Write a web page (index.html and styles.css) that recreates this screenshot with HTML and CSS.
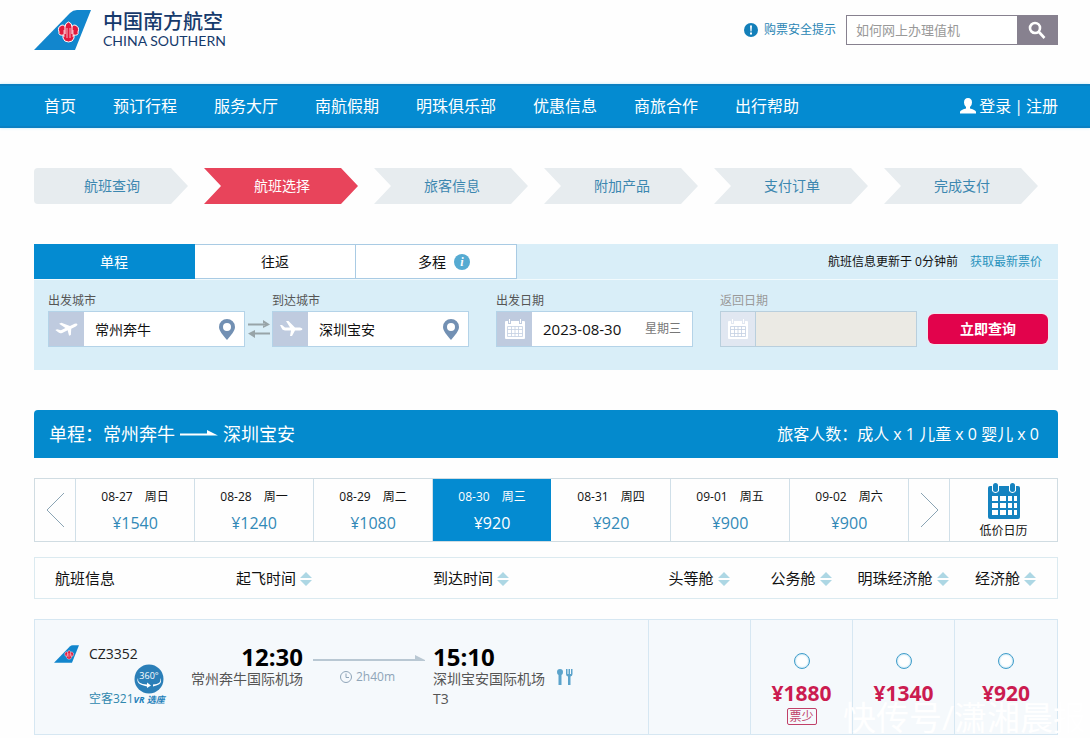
FILE: index.html
```html
<!DOCTYPE html>
<html lang="zh-CN">
<head>
<meta charset="utf-8">
<title>中国南方航空 - 航班选择</title>
<link rel="stylesheet" href="styles.css">
</head>
<body>
<svg class="defs" aria-hidden="true">
  <symbol id="tail" viewBox="0 0 57 40">
    <path d="M0 40 L36 3 Q39 0 43 0 H57 L41 40Z" fill="#1286cd"/>
    <g fill="#e2183d" stroke="#fff" stroke-width="1">
      <path d="M29 22 H40 V28 Q39 32 34.500 32 Q30 32 29 28Z"/>
      <path d="M30 25 Q24 26 25 22 Q23 17 28 15 Q32 15 32 20 V26Z"/>
      <path d="M39 25 Q45 26 44 22 Q46 17 41 15 Q37 15 37 20 V26Z"/>
      <path d="M31 26 V17 Q31 13 34.500 12 Q38 13 38 17 V26Z"/>
    </g>
    <path d="M30 24H39V29H30Z" fill="#e2183d"/>
    <path d="M33 18 V28 M36 18 V28 M30 20 V27 M39 20 V27" stroke="#fff" stroke-width=".7"/>
  </symbol>
  <symbol id="pin" viewBox="0 0 16 21">
    <path fill-rule="evenodd" d="M8 0a8 8 0 0 1 8 8c0 4-4 8-8 13C4 16 0 12 0 8a8 8 0 0 1 8-8zm0 4a4 4 0 1 0 0 8 4 4 0 0 0 0-8z" fill="#7290b3"/>
  </symbol>
  <symbol id="plane" viewBox="0 0 24 20">
    <path d="M1 6 L3 6 L6 8.500 L11 8.500 L7 2 L9.500 2 L16 8.500 H21 Q23.500 9 23.500 10 Q23.500 11 21 11.500 H16 L13 17 H11 L12 11.500 H6 Q3 11 2.500 9Z" fill="#fff"/>
  </symbol>
  <symbol id="cal" viewBox="0 0 20 20">
    <path d="M1 2H3V5H6V2H14V5H17V2H19Q20 2 20 3V19Q20 20 19 20H1Q0 20 0 19V3Q0 2 1 2Z" fill="#fff"/>
    <path d="M4 0H5V4H4ZM15 0H16V4H15Z" fill="#fff"/>
    <path d="M2.500 7.500H17.500V17.500H2.500ZM2.500 10.500H17.500M2.500 14.500H17.500M6.500 7.500V17.500M10 7.500V17.500M13.500 7.500V17.500" fill="none" stroke="#c3cfe2" stroke-width=".8"/>
  </symbol>
  <symbol id="sort" viewBox="0 0 12 14">
    <path d="M6 0 L12 6 H0Z M0 8 H12 L6 14Z" fill="#add7e4"/>
  </symbol>
</svg>

<header class="top wrap">
  <a class="brand" href="#">
    <svg class="brand-tail"><use href="#tail"/></svg>
    <span class="brand-text"><span class="brand-cn">中国南方航空</span><span class="brand-en">CHINA SOUTHERN</span></span>
  </a>
  <a class="safety" href="#">
    <svg viewBox="0 0 14 14" width="14" height="14"><circle cx="7" cy="7" r="7" fill="#137fb9"/><path d="M6 2.500H8L7.500 8.500H6.500ZM6 9.500H8V11.500H6Z" fill="#fff"/></svg>
    购票安全提示
  </a>
  <form class="site-search">
    <input type="text" aria-label="搜索" placeholder="如何网上办理值机">
    <button type="button" aria-label="搜索"><svg viewBox="0 0 18 18" width="18" height="18" fill="none" stroke="#fff" stroke-width="2.600"><circle cx="7" cy="7" r="5"/><path d="M10.500 10.500 L16.500 17"/></svg></button>
  </form>
</header>

<nav class="nav">
  <div class="wrap nav-inner">
    <a href="#">首页</a><a href="#">预订行程</a><a href="#">服务大厅</a><a href="#">南航假期</a><a href="#">明珠俱乐部</a><a href="#">优惠信息</a><a href="#">商旅合作</a><a href="#">出行帮助</a>
    <div class="account">
      <svg viewBox="0 0 16 16" width="16" height="16"><path d="M8 0Q12 0 12 4.500Q12 7.500 10 9V10.500Q16 12 16 14V15.500H0V14Q0 12 6 10.500V9Q4 7.500 4 4.500Q4 0 8 0Z" fill="#fff"/></svg>
      <a href="#">登录</a><span>|</span><a href="#">注册</a>
    </div>
  </div>
</nav>

<main class="wrap">
  <ol class="steps">
    <li>航班查询</li><li class="current">航班选择</li><li>旅客信息</li><li>附加产品</li><li>支付订单</li><li>完成支付</li>
  </ol>

  <form class="search">
    <div class="search-head">
      <button type="button" class="tab active">单程</button>
      <button type="button" class="tab">往返</button>
      <button type="button" class="tab multi">多程 <span class="info">i</span></button>
      <p class="updated">航班信息更新于 0分钟前 <a href="#">获取最新票价</a></p>
    </div>
    <div class="search-body">
      <div class="field">
        <label for="from">出发城市</label>
        <div class="box"><span class="box-icon"><svg class="plane-up" width="24" height="20"><use href="#plane"/></svg></span><input id="from" type="text" value="常州奔牛"><svg class="pin" width="16" height="21"><use href="#pin"/></svg></div>
      </div>
      <button type="button" class="swap" aria-label="交换城市"><svg viewBox="0 0 24 18" width="24" height="18"><path d="M1 4.500H18M6 13.500H23" stroke="#98a4a8" stroke-width="2"/><path d="M16 0L23 4.500L16 8V5.500H18V3.500H16ZM8 10L1 13.500L8 18Z" fill="#98a4a8"/></svg></button>
      <div class="field">
        <label for="to">到达城市</label>
        <div class="box"><span class="box-icon"><svg width="24" height="20"><use href="#plane"/></svg></span><input id="to" type="text" value="深圳宝安"><svg class="pin" width="16" height="21"><use href="#pin"/></svg></div>
      </div>
      <div class="field spaced">
        <label for="depart">出发日期</label>
        <div class="box"><span class="box-icon"><svg width="20" height="20"><use href="#cal"/></svg></span><input id="depart" class="date" type="text" value="2023-08-30"><span class="weekday">星期三</span></div>
      </div>
      <div class="field spaced off">
        <label for="return">返回日期</label>
        <div class="box"><span class="box-icon"><svg width="20" height="20"><use href="#cal"/></svg></span><input id="return" type="text" disabled></div>
      </div>
      <div class="go"><button type="button">立即查询</button></div>
    </div>
  </form>

  <section class="route">
    <h1>单程：常州奔牛<svg viewBox="0 0 38 10" width="38" height="10"><path d="M0 6.500H38L27 1V4.500H0Z" fill="#fff"/></svg>深圳宝安</h1>
    <p>旅客人数：成人 x 1 儿童 x 0 婴儿 x 0</p>
  </section>

  <div class="dates">
    <button type="button" aria-label="前一天"><svg viewBox="0 0 19 36" width="19" height="36" fill="none" stroke="#8aa4b4"><path d="M18 1L1 18L18 35"/></svg></button>
    <button type="button"><span class="day"><span>08-27</span><span>周日</span></span><span class="fare">¥1540</span></button>
    <button type="button"><span class="day"><span>08-28</span><span>周一</span></span><span class="fare">¥1240</span></button>
    <button type="button"><span class="day"><span>08-29</span><span>周二</span></span><span class="fare">¥1080</span></button>
    <button type="button" class="active"><span class="day"><span>08-30</span><span>周三</span></span><span class="fare">¥920</span></button>
    <button type="button"><span class="day"><span>08-31</span><span>周四</span></span><span class="fare">¥920</span></button>
    <button type="button"><span class="day"><span>09-01</span><span>周五</span></span><span class="fare">¥900</span></button>
    <button type="button"><span class="day"><span>09-02</span><span>周六</span></span><span class="fare">¥900</span></button>
    <button type="button" aria-label="后一天"><svg viewBox="0 0 19 36" width="19" height="36" fill="none" stroke="#8aa4b4"><path d="M1 1L18 18L1 35"/></svg></button>
    <button type="button" class="low">
      <svg viewBox="0 0 32 36" width="32" height="36"><rect y="3" width="32" height="33" rx="2" fill="#1583c0"/><path d="M4 2H11V8Q7.500 12 4 8ZM21 2H28V8Q24.500 12 21 8Z" fill="#fff"/><rect x="5" width="5" height="9" rx="2.500" fill="#1583c0"/><rect x="22" width="5" height="9" rx="2.500" fill="#1583c0"/><path d="M4 13H10V18H4ZM12 13H18V18H12ZM20 13H24V18H20ZM26 13H29V18H26ZM4 20H10V25H4ZM12 20H18V25H12ZM20 20H24V25H20ZM26 20H29V25H26ZM4 27H10V32H4ZM12 27H18V32H12ZM20 27H24V32H20ZM26 27H29V32H26Z" fill="#fff"/></svg>
      低价日历
    </button>
  </div>

  <div class="results">
    <table class="flights">
      <colgroup><col class="c-info"><col class="c-dep"><col class="c-dur"><col><col class="c-fare"><col class="c-fare"><col class="c-fare"><col class="c-last"></colgroup>
      <thead>
        <tr>
          <th class="h-info">航班信息</th>
          <th class="h-dep" colspan="2">起飞时间<svg width="12" height="14"><use href="#sort"/></svg></th>
          <th class="h-arr">到达时间<svg width="12" height="14"><use href="#sort"/></svg></th>
          <th>头等舱<svg width="12" height="14"><use href="#sort"/></svg></th>
          <th>公务舱<svg width="12" height="14"><use href="#sort"/></svg></th>
          <th>明珠经济舱<svg width="12" height="14"><use href="#sort"/></svg></th>
          <th>经济舱<svg width="12" height="14"><use href="#sort"/></svg></th>
        </tr>
      </thead>
      <tbody>
        <tr>
          <td>
            <div class="flight">
              <svg class="mini-tail"><use href="#tail"/></svg>
              <div class="flight-text">
                <span class="number">CZ3352</span>
                <div class="craft"><a href="#">空客321</a>
                  <a class="vr" href="#"><svg viewBox="0 0 30 30" width="30" height="30"><circle cx="15" cy="15" r="14.500" fill="#2b7fb8"/><path d="M4 14Q3 20 13 20.500V18.500L17 21.500L13 24V22.500Q1 20 4 14ZM26 14Q28 20 19 20.500V22.500Q30 20 26 14Z" fill="#fff"/><text x="15" y="15" class="vr-deg">360°</text></svg><span>VR 选座</span></a>
                </div>
              </div>
            </div>
          </td>
          <td class="dep"><strong>12:30</strong><span>常州奔牛国际机场</span></td>
          <td class="dur">
            <svg viewBox="0 0 112 6" width="112" height="6"><path d="M0 4H102V0L112 5V6H0Z" fill="#b9c8d3"/></svg>
            <span><svg viewBox="0 0 12 12" width="12" height="12" fill="none" stroke="#8fa5b8"><circle cx="6" cy="6" r="5.500"/><path d="M6 2.500V6.500H9"/></svg>2h40m</span>
          </td>
          <td class="arr"><div class="arr-row"><div><strong>15:10</strong><span>深圳宝安国际机场</span><span>T3</span></div>
            <svg class="meal" viewBox="0 0 16 16" width="16" height="16"><path d="M3 0Q6 0 6 3Q6 5.500 4.500 6V16H1.500V6Q0 5.500 0 3Q0 0 3 0ZM9 0H10.500V5H11.500V0H13V5H14V0H15.500V5Q15.500 7 13.500 7.500V16H11V7.500Q9 7 9 5Z" fill="#5ba3cb"/></svg></div></td>
          <td class="fare-cell"></td>
          <td class="fare-cell"><label><input type="radio" name="fare"><b>¥1880</b></label><em>票少</em></td>
          <td class="fare-cell"><label><input type="radio" name="fare"><b>¥1340</b></label></td>
          <td class="fare-cell"><label><input type="radio" name="fare"><b>¥920</b></label></td>
        </tr>
      </tbody>
    </table>
    <div class="watermark">快传号/潇湘晨报</div>
  </div>
</main>
</body>
</html>
```
FILE: styles.css
```css
* { box-sizing: border-box; }
body {
  margin: 0;
  background: #fefefe;
  color: #111;
  font: 14px/20px "Open Sans", "Noto Sans CJK SC", sans-serif;
}
a { color: inherit; text-decoration: none; }
button, input { font: inherit; color: inherit; margin: 0; padding: 0; border: 0; background: none; }
button { cursor: pointer; }
p, h1, ol { margin: 0; padding: 0; }
svg { flex: none; display: block; }
.defs { position: absolute; width: 0; height: 0; }
.wrap { padding: 0 32px 0 34px; }

.top { display: flex; align-items: center; height: 84px; padding-bottom: 24px; }
.brand { display: flex; gap: 12px; margin-right: auto; color: #163a6c; }
.brand-tail { width: 57px; height: 40px; }
.brand-text { display: flex; flex-direction: column; align-items: flex-start; }
.brand-cn { font-size: 20px; font-weight: 500; line-height: 24px; }
.brand-en { font: 14px/14px Lato, sans-serif; -webkit-text-stroke: 0; }
.safety { display: flex; align-items: center; gap: 6px; margin-right: 10px; font-size: 12px; color: #2a85b4; }
.site-search { display: flex; width: 212px; height: 30px; border: 1px solid #87818f; background: #fff; }
.site-search input { flex: 1; min-width: 0; padding-left: 9px; font-size: 13px; }
.site-search input::placeholder { color: #999; opacity: 1; }
.site-search button { display: flex; align-items: center; justify-content: center; width: 40px; background: #87818f; }

.nav { background: #048bd1; border-top: 2px solid #0a80c2; border-bottom: 2px solid #0a80c2; box-shadow: 0 0 3px #bfeaf9; color: #fff; font-size: 16px; }
.nav-inner { display: flex; align-items: center; gap: 37px; height: 40px; padding-left: 44px; }
.account { display: flex; align-items: center; gap: 3px; margin-left: auto; }

.steps { display: grid; grid-template-columns: repeat(6, 1fr); gap: 16px; margin-top: 40px; padding-right: 20px; list-style: none; }
.steps li { height: 36px; padding-left: 2px; line-height: 36px; text-align: center; color: #3c87b0; background: #e7ecef; clip-path: polygon(0 0, calc(100% - 17px) 0, 100% 50%, calc(100% - 17px) 100%, 0 100%, 17px 50%); }
.steps li:first-child { border-radius: 4px; clip-path: polygon(0 0, calc(100% - 17px) 0, 100% 50%, calc(100% - 17px) 100%, 0 100%); }
.steps .current { color: #fff; background: #e8445b; }

.search { margin-top: 40px; background: #d9eef8; }
.search-head { display: flex; border-bottom: 1px solid #f2fafd; }
.tab { display: flex; align-items: center; justify-content: center; gap: 8px; width: 161px; height: 35px; border: 1px solid #a9cbe4; border-left-width: 0; background: #fff; }
.tab.active { color: #fff; background: #048bd1; border-color: #048bd1; }
.tab.multi { padding-left: 16px; }
.info { width: 16px; height: 16px; border-radius: 50%; background: #56abd2; color: #fff; font: italic bold 12px/16px "Liberation Serif", serif; }
.updated { display: flex; gap: 12px; align-items: center; margin-left: auto; padding-right: 16px; font-size: 12px; }
.updated a { color: #2a93bd; }
.search-body { display: flex; align-items: flex-end; padding: 11px 10px 23px 14px; }
.field { flex: 1; min-width: 0; }
.field.spaced { margin-left: 27px; }
.field label { display: block; font-size: 12px; color: #555; }
.box { display: flex; align-items: center; height: 36px; border: 1px solid #b4d3e8; background: #fff; }
.box-icon { display: flex; align-items: center; justify-content: center; width: 35px; height: 34px; background: #bfcbdf; }
.plane-up { transform: rotate(-25deg); }
.box input { flex: 1; min-width: 0; height: 34px; padding-left: 11px; }
.box .date { font-size: 15px; }
.pin { margin-right: 9px; }
.weekday { margin-right: 11px; font-size: 12px; color: #777; }
.off label { color: #999; }
.off .box { border-color: #b9cfdd; background: #ebeae4; }
.off .box-icon { background: #e1e7f1; border-right: 1px solid #b9cfdd; }
.swap { display: flex; align-items: center; justify-content: center; width: 27px; height: 36px; }
.go { display: flex; align-items: center; height: 36px; margin-left: 11px; }
.go button { width: 120px; height: 30px; border-radius: 6px; background: #e2034c; box-shadow: 0 0 0 1px #f3e3ee; color: #fff; font-weight: bold; }

.route { display: flex; align-items: center; justify-content: space-between; height: 48px; margin-top: 40px; padding: 0 19px 0 15px; border-radius: 4px 4px 0 0; background: #048acd; color: #fff; }
.route h1 { display: flex; align-items: center; gap: 5px; font-size: 18px; font-weight: normal; }
.route p { font-size: 16px; }

.dates { display: grid; grid-template-columns: 41px repeat(7, 1fr) 41px 107px; height: 64px; margin-top: 20px; border: 1px solid #d0dce2; }
.dates button { display: flex; flex-direction: column; align-items: center; justify-content: center; gap: 6px; border-right: 1px solid #d0dfe8; }
.dates button:last-child { border-right: 0; }
.dates .active { background: #048bd1; color: #fff; border-color: #fff; }
.day { display: flex; gap: 12px; font-size: 12px; }
.fare { font-size: 16px; color: #3289b7; }
.active .fare { color: #fff; }
.dates .low { gap: 2px; padding-top: 4px; font-size: 12px; }

.results { position: relative; margin-top: 15px; }
.flights { width: 100%; table-layout: fixed; border-collapse: separate; border-spacing: 0; }
.c-info { width: 151px; }
.c-dep { width: 120px; }
.c-dur { width: 124px; }
.c-fare { width: 102px; }
.c-last { width: 104px; }
th { height: 42px; padding: 0; border: solid #dbeaf0; border-width: 1px 0; font-size: 15px; font-weight: normal; text-align: center; white-space: nowrap; }
th:first-child { border-left-width: 1px; }
th:last-child { border-right-width: 1px; }
th svg { display: inline-block; margin-left: 4px; vertical-align: -2px; }
th.h-info { padding-left: 20px; text-align: left; }
th.h-dep { padding-left: 51px; text-align: left; }
th.h-arr { padding-left: 4px; text-align: left; }
tbody::before { content: ""; display: block; height: 20px; }
td { height: 116px; padding: 24px 0 0; border: solid #d6e7f2; border-width: 1px 0; background: #f5f9fc; vertical-align: top; }
td:first-child { border-left-width: 1px; }
td:last-child { border-right-width: 1px; }
td strong { display: block; font-size: 24px; line-height: 25px; color: #000; }
td span { display: block; color: #555; white-space: nowrap; }
.flight { display: flex; gap: 10px; padding-left: 19px; }
.mini-tail { width: 25px; height: 20px; }
.flight-text .number { color: #222; }
.craft { display: flex; align-items: flex-end; font-size: 12px; line-height: 14px; color: #2f88ae; }
.vr { display: flex; flex-direction: column; align-items: center; }
.vr span { color: #1c7fba; font-size: 9px; line-height: 12px; font-style: italic; font-weight: bold; }
.vr-deg { fill: #fff; font-size: 9px; text-anchor: middle; }
.dep { text-align: right; padding-right: 2px; }
.dur { padding: 35px 0 0 8px; }
.dur span { display: flex; align-items: center; gap: 4px; padding: 6px 0 0 27px; font-size: 12px; color: #8fa5b8; }
.arr { padding-left: 4px; }
.arr-row { display: flex; align-items: center; gap: 12px; }
.fare-cell { padding-top: 33px; border-left-width: 1px; text-align: center; }
.fare-cell label { display: flex; flex-direction: column; align-items: center; gap: 14px; }
.fare-cell input { appearance: none; width: 16px; height: 16px; border: 1px solid #3f9dca; border-radius: 50%; background: #fff; box-shadow: inset 0 0 2px #7cc4e6; }
.fare-cell b { font-size: 21px; color: #cb1c50; }
.fare-cell em { display: inline-block; width: 30px; height: 17px; margin-top: 5px; border: 1px solid #c04068; border-radius: 2px; font-size: 12px; line-height: 15px; font-style: normal; color: #c04068; }
.watermark { position: absolute; right: -28px; bottom: 0; color: #fff; font-size: 33px; line-height: 34px; white-space: nowrap; pointer-events: none; }
```
